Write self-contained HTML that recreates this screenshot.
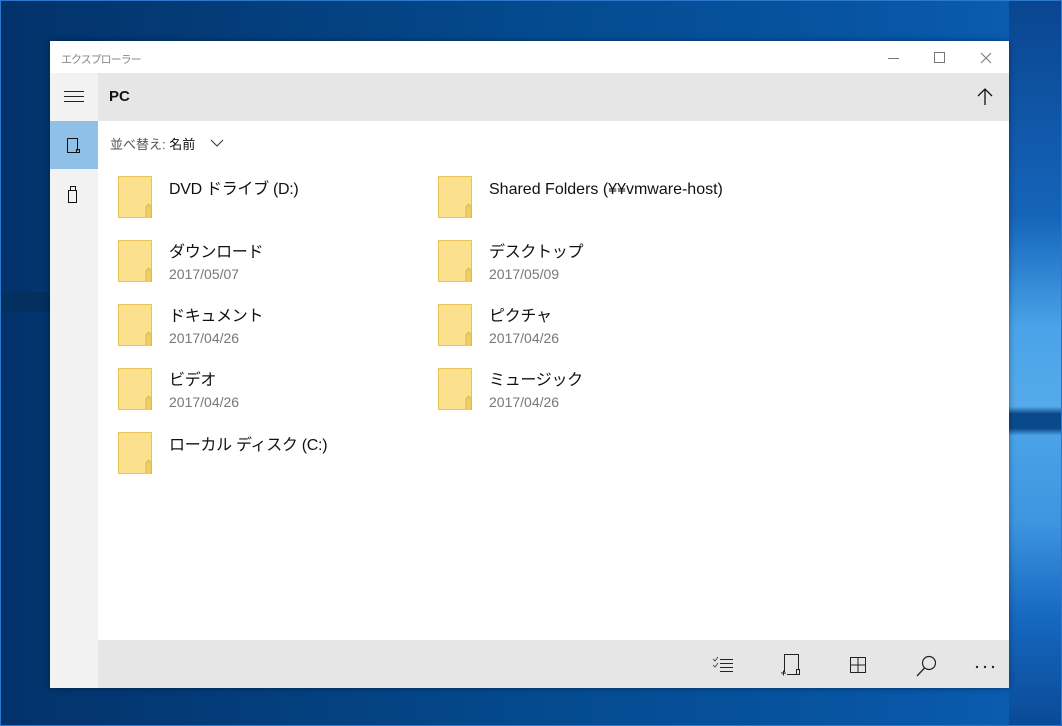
<!DOCTYPE html>
<html><head><meta charset="utf-8"><style>
*{margin:0;padding:0;box-sizing:border-box}
body{width:1062px;height:726px;overflow:hidden;position:relative;font-family:"Liberation Sans","Noto Sans CJK JP",sans-serif;
background:linear-gradient(90deg,#03326a 0%,#044a8e 50%,#0856a6 85%,#0b5fb4 100%);}
.scr{position:absolute;inset:0;border:1px solid #2e78cc}
.rays{position:absolute;left:1009px;top:0;width:53px;height:726px;background:linear-gradient(180deg,#0a4590 0%,#1565bb 30%,#4aa3e8 45%,#54aaea 56%,#0b4a8a 57%,#0b4a8a 59%,#4aa3e8 60%,#3d95e0 72%,#1668c0 85%,#0a4a96 100%)}
.band{position:absolute;left:0;top:292px;width:50px;height:20px;background:#03305f}
.win{position:absolute;left:50px;top:41px;width:959px;height:647px;background:#fff;box-shadow:0 0 6px rgba(0,0,0,.4)}
.title{position:absolute;left:0;top:0;width:959px;height:32px;background:#fff;font-size:11px;letter-spacing:-1px;color:#888;padding:10px 0 0 11px}
.hdr{position:absolute;left:48px;top:32px;width:911px;height:48px;background:#e6e6e6;font-size:15px;font-weight:bold;color:#111;padding:15px 0 0 11px}
.lp{position:absolute;left:0;top:32px;width:48px;height:615px;background:#f2f2f2}
.sel{position:absolute;left:0;top:80px;width:48px;height:48px;background:#8fc0e8}
.bot{position:absolute;left:48px;top:599px;width:911px;height:48px;background:#e6e6e6}
.sort{position:absolute;left:60px;top:93px;font-size:13px;color:#555}
.sort b{color:#111;font-weight:normal}
.it{position:absolute;width:330px;height:48px}
.it svg{position:absolute;left:0;top:0}
.nm{position:absolute;left:51px;top:4px;height:20px;line-height:20px;font-size:16px;color:#111;white-space:nowrap;letter-spacing:-0.3px}
.d .nm{top:3px}
.dt{position:absolute;left:51px;top:26px;font-size:14px;color:#777}
</style></head><body>
<div class="rays"></div><div class="band"></div>
<div class="scr"></div>
<div class="win">
<div class="title">エクスプローラー</div>
<svg style="position:absolute;left:835px;top:10px" width="120" height="14"><line x1="3" y1="7.5" x2="14" y2="7.5" stroke="#777"/><rect x="49.5" y="1.5" width="10" height="10" fill="none" stroke="#777"/><path d="M96 2L106 12M106 2L96 12" stroke="#777"/></svg>
<div class="lp"></div><div class="sel"></div>
<svg style="position:absolute;left:14px;top:50px" width="20" height="12"><path d="M0 .5H20M0 5.5H20M0 10.5H20" stroke="#222"/></svg>
<svg style="position:absolute;left:17px;top:97px" width="14" height="16"><path d="M.5 .5H10.5V12.5M.5 .5V14.5H10.5" fill="none" stroke="#111"/><rect x="9.5" y="11.5" width="3" height="3" fill="none" stroke="#111"/></svg>
<svg style="position:absolute;left:17px;top:145px" width="12" height="18"><rect x="3.5" y=".5" width="5" height="4" fill="none" stroke="#111"/><rect x="1.5" y="4.5" width="8" height="12" fill="none" stroke="#111"/></svg>
<div class="hdr">PC</div>
<svg style="position:absolute;left:927px;top:47px" width="16" height="18"><path d="M8 1V17M1 8L8 1L15 8" fill="none" stroke="#111" stroke-width="1.3"/></svg>
<div class="sort">並べ替え: <b>名前</b></div>
<svg style="position:absolute;left:160px;top:98px" width="14" height="8"><path d="M1 1L7 7L13 1" fill="none" stroke="#333"/></svg>
<div class="bot"></div>
<svg style="position:absolute;left:660px;top:612px" width="290" height="26">
<path d="M3 6l2 2 3-4M3 12l2 2 3-4" stroke="#333" fill="none" stroke-width=".8"/><path d="M10 6.5H23M10 10.5H23M10 14.5H23M10 18.5H23" stroke="#222"/>
<path d="M74.5 19V1.5H88.5V16.5M77 21.5H86" fill="none" stroke="#222"/><rect x="86.5" y="16.5" width="3" height="5" fill="none" stroke="#222"/><path d="M71 20H76M73.5 17.5V22.5" stroke="#222"/>
<rect x="140.5" y="4.5" width="15" height="15" fill="none" stroke="#222"/><path d="M148 4.5V19.5M140.5 12H155.5" stroke="#222"/>
<circle cx="219" cy="10" r="6.5" fill="none" stroke="#222" stroke-width="1.2"/><path d="M214.5 15L207 23" stroke="#222" stroke-width="1.3"/>
<circle cx="267" cy="14" r="1.2" fill="#222"/><circle cx="275" cy="14" r="1.2" fill="#222"/><circle cx="283" cy="14" r="1.2" fill="#222"/>
</svg>
</div>
<div style="position:absolute;left:0;top:0">
<div class="it" style="left:118px;top:176px"><svg width="36" height="44"><rect x=".5" y=".5" width="33" height="41" fill="#fbe08e" stroke="#e8c35a"/><path d="M28 42V31l2.5-3 3 3v11" fill="#f3cc66" stroke="#e0b74e"/></svg><div class="nm">DVD ドライブ (D:)</div></div>
<div class="it" style="left:438px;top:176px"><svg width="36" height="44"><rect x=".5" y=".5" width="33" height="41" fill="#fbe08e" stroke="#e8c35a"/><path d="M28 42V31l2.5-3 3 3v11" fill="#f3cc66" stroke="#e0b74e"/></svg><div class="nm" style="letter-spacing:0">Shared Folders (&#165;&#165;vmware-host)</div></div>
<div class="it d" style="left:118px;top:240px"><svg width="36" height="44"><rect x=".5" y=".5" width="33" height="41" fill="#fbe08e" stroke="#e8c35a"/><path d="M28 42V31l2.5-3 3 3v11" fill="#f3cc66" stroke="#e0b74e"/></svg><div class="nm">ダウンロード</div><div class="dt">2017/05/07</div></div>
<div class="it d" style="left:438px;top:240px"><svg width="36" height="44"><rect x=".5" y=".5" width="33" height="41" fill="#fbe08e" stroke="#e8c35a"/><path d="M28 42V31l2.5-3 3 3v11" fill="#f3cc66" stroke="#e0b74e"/></svg><div class="nm">デスクトップ</div><div class="dt">2017/05/09</div></div>
<div class="it d" style="left:118px;top:304px"><svg width="36" height="44"><rect x=".5" y=".5" width="33" height="41" fill="#fbe08e" stroke="#e8c35a"/><path d="M28 42V31l2.5-3 3 3v11" fill="#f3cc66" stroke="#e0b74e"/></svg><div class="nm">ドキュメント</div><div class="dt">2017/04/26</div></div>
<div class="it d" style="left:438px;top:304px"><svg width="36" height="44"><rect x=".5" y=".5" width="33" height="41" fill="#fbe08e" stroke="#e8c35a"/><path d="M28 42V31l2.5-3 3 3v11" fill="#f3cc66" stroke="#e0b74e"/></svg><div class="nm">ピクチャ</div><div class="dt">2017/04/26</div></div>
<div class="it d" style="left:118px;top:368px"><svg width="36" height="44"><rect x=".5" y=".5" width="33" height="41" fill="#fbe08e" stroke="#e8c35a"/><path d="M28 42V31l2.5-3 3 3v11" fill="#f3cc66" stroke="#e0b74e"/></svg><div class="nm">ビデオ</div><div class="dt">2017/04/26</div></div>
<div class="it d" style="left:438px;top:368px"><svg width="36" height="44"><rect x=".5" y=".5" width="33" height="41" fill="#fbe08e" stroke="#e8c35a"/><path d="M28 42V31l2.5-3 3 3v11" fill="#f3cc66" stroke="#e0b74e"/></svg><div class="nm">ミュージック</div><div class="dt">2017/04/26</div></div>
<div class="it" style="left:118px;top:432px"><svg width="36" height="44"><rect x=".5" y=".5" width="33" height="41" fill="#fbe08e" stroke="#e8c35a"/><path d="M28 42V31l2.5-3 3 3v11" fill="#f3cc66" stroke="#e0b74e"/></svg><div class="nm">ローカル ディスク (C:)</div></div>
</div>
</body></html>
